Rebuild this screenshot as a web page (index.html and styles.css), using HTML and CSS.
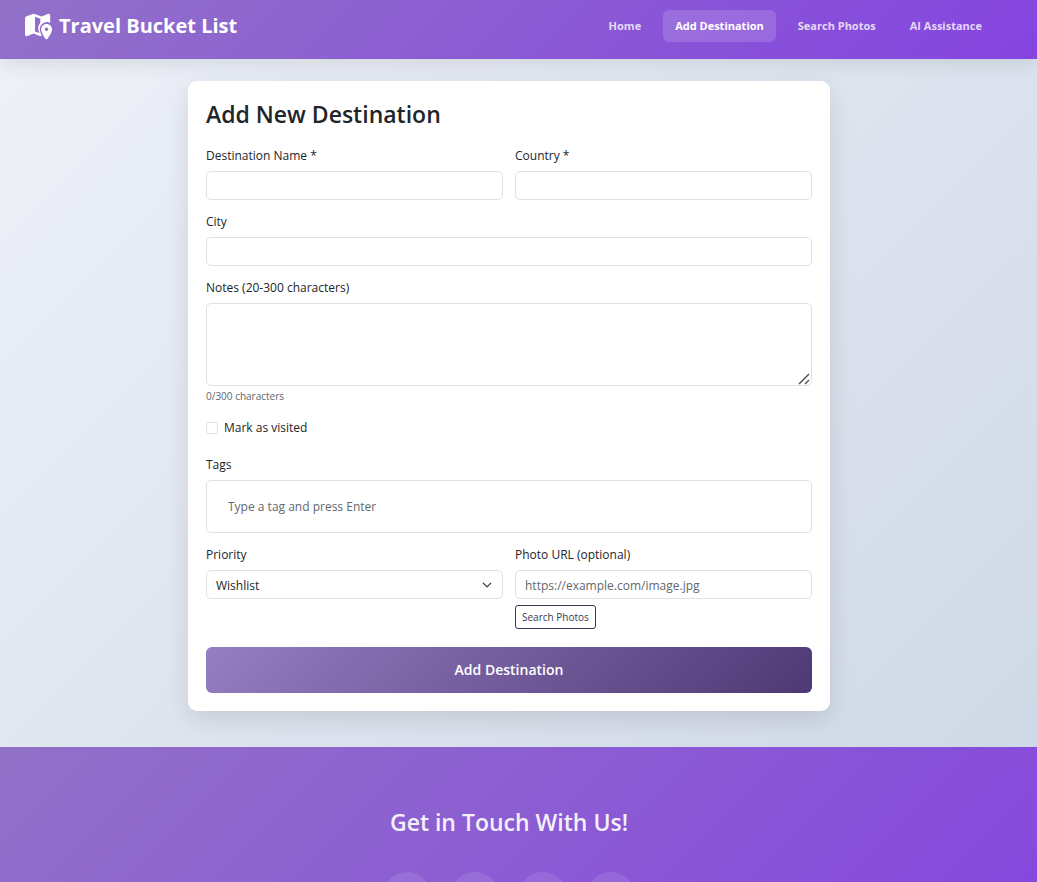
FILE: index.html
```html
<!DOCTYPE html>
<html lang="en">
<head>
<meta charset="utf-8">
<meta name="viewport" content="width=device-width, initial-scale=1">
<title>Travel Bucket List</title>
<link rel="stylesheet" href="styles.css">
</head>
<body>
<header class="navbar">
  <a class="brand" href="#">
    <svg class="brand-icon" viewBox="0 0 29 27" aria-hidden="true">
      <path fill="#fff" fill-rule="evenodd" d="M2.500 3.200 L9 0.900 Q9.800 0.600 10.600 0.900 L17.600 3.600 L23.800 1 Q26.200 0.200 26.200 2.500 V9.600 Q22.500 8.400 19.300 10.100 Q15.800 12.200 15.800 16.300 Q16 19.300 17.700 22.800 Q16.800 23.300 15.800 22.900 L9.600 20.500 L3.400 23.100 Q1 23.900 1 21.500 V5.300 Q1 3.700 2.500 3.200Z M11 3.700 V18.400 L15.400 20 Q13.900 16.500 14.300 14 Q14.700 11.500 16.300 9.800 V5.800Z"/>
      <path fill="#fff" fill-rule="evenodd" d="M22.500 11 C19.400 11 17.200 13.300 17.200 16.200 C17.200 19.100 19.700 23.400 21.700 25.900 Q22.500 26.800 23.300 25.900 C25.300 23.400 28 19.100 28 16.200 C28 13.300 25.700 11 22.500 11Z M22.500 18 A1.800 1.800 0 1 1 22.500 14.400 A1.800 1.800 0 1 1 22.500 18Z"/>
    </svg>
    <span>Travel Bucket List</span>
  </a>
  <nav class="nav">
    <a class="nav-link" href="#">Home</a>
    <a class="nav-link active" href="#" aria-current="page">Add Destination</a>
    <a class="nav-link" href="#">Search Photos</a>
    <a class="nav-link" href="#">AI Assistance</a>
  </nav>
</header>

<main class="page">
  <form class="card">
    <h1 class="card-title">Add New Destination</h1>
    <div class="row">
      <div class="field">
        <label for="name">Destination Name *</label>
        <input class="control" id="name" type="text">
      </div>
      <div class="field">
        <label for="country">Country *</label>
        <input class="control" id="country" type="text">
      </div>
    </div>
    <div class="field">
      <label for="city">City</label>
      <input class="control" id="city" type="text">
    </div>
    <div class="field">
      <label for="notes">Notes (20-300 characters)</label>
      <textarea class="control notes" id="notes"></textarea>
      <small class="hint">0/300 characters</small>
    </div>
    <div class="check">
      <input id="visited" type="checkbox">
      <label for="visited">Mark as visited</label>
    </div>
    <div class="field">
      <label for="tags">Tags</label>
      <input class="control tags" id="tags" type="text" placeholder="Type a tag and press Enter">
    </div>
    <div class="row">
      <div class="field">
        <label for="priority">Priority</label>
        <select class="control select" id="priority"><option>Wishlist</option></select>
      </div>
      <div class="field">
        <label for="photo">Photo URL (optional)</label>
        <input class="control" id="photo" type="url" placeholder="https://example.com/image.jpg">
        <button class="search" type="button">Search Photos</button>
      </div>
    </div>
    <button class="submit" type="submit">Add Destination</button>
  </form>
</main>

<footer class="footer">
  <h2 class="footer-title">Get in Touch With Us!</h2>
  <div class="socials">
    <a class="social" href="#" aria-label="Facebook"></a>
    <a class="social" href="#" aria-label="Instagram"></a>
    <a class="social" href="#" aria-label="LinkedIn"></a>
    <a class="social" href="#" aria-label="GitHub"></a>
  </div>
</footer>
</body>
</html>
```
FILE: styles.css
```css
:root {
  --gutter: 24px;
  --scrollbar: 19px;
  --purple: linear-gradient(135deg, #9171c8 0%, #8544e0 100%);
}

* { box-sizing: border-box; }

body {
  margin: 0;
  font-family: "Segoe UI", "Open Sans", sans-serif;
  font-size: 12px;
  line-height: 18px;
  color: #212529;
  background: linear-gradient(135deg, #eef1f8 0%, #cbd5e4 100%);
}

a { color: inherit; text-decoration: none; }
input, textarea, select, button { font: inherit; color: inherit; }

.navbar {
  display: flex;
  align-items: center;
  justify-content: space-between;
  padding: 10px calc(var(--gutter) + var(--scrollbar)) 17px var(--gutter);
  background: var(--purple);
  color: #fff;
  box-shadow: 0 4px 20px rgba(0, 0, 0, 0.1);
}

.brand {
  display: flex;
  align-items: center;
  gap: 6px;
  font-size: 20px;
  line-height: 32px;
  font-weight: 700;
}

.brand-icon { width: 29px; height: 27px; }

.nav { display: flex; gap: 10px; }

.nav-link {
  padding: 7px 12px;
  border-radius: 6px;
  font-size: 11px;
  font-weight: 700;
  color: rgba(255, 255, 255, 0.8);
}

.nav-link.active {
  color: #fff;
  background: rgba(255, 255, 255, 0.15);
}

.page { padding: 22px calc(var(--gutter) + var(--scrollbar)) 36px var(--gutter); }

.card {
  max-width: 642px;
  margin: 0 auto;
  padding: 18px;
  border-radius: 9px;
  background: #fff;
  box-shadow: 0 8px 24px rgba(0, 0, 0, 0.11);
}

.card-title {
  margin: 0 0 18px;
  font-size: 23px;
  line-height: 30px;
  font-weight: 600;
}

.row { display: grid; grid-template-columns: 1fr 1fr; gap: 12px; }
.field { display: flex; flex-direction: column; align-items: flex-start; margin-bottom: 13px; }
.field label { margin-bottom: 6px; }

.control {
  display: block;
  width: 100%;
  height: 29px;
  padding: 6px 9px 4px;
  border: 1px solid #dee2e6;
  border-radius: 5px;
  background-color: #fff;
}

.control::placeholder { color: #62686e; opacity: 1; }

.notes {
  height: 83px;
  resize: none;
  background-image: url("data:image/svg+xml,%3Csvg xmlns='http://www.w3.org/2000/svg' width='12' height='12' fill='none' stroke='%23555' stroke-width='1.500'%3E%3Cpath d='M1 11L11 1M7 11L11 7'/%3E%3C/svg%3E");
  background-repeat: no-repeat;
  background-position: right 1px bottom 0;
}

.hint { font-size: 10px; line-height: 16px; margin-top: 2px; color: #60666c; }

.check { display: flex; align-items: center; gap: 6px; margin: 15px 0 19px; }

.check input {
  appearance: none;
  width: 12px;
  height: 12px;
  margin: 0;
  border: 1px solid #dee2e6;
  border-radius: 3px;
  background: #fff;
}

.tags { height: 53px; padding: 4px 21px; }

.select {
  appearance: none;
  background-image: url("data:image/svg+xml,%3Csvg xmlns='http://www.w3.org/2000/svg' viewBox='0 0 16 16'%3E%3Cpath fill='none' stroke='%23343a40' stroke-linecap='round' stroke-linejoin='round' stroke-width='2' d='m2 5 6 6 6-6'/%3E%3C/svg%3E");
  background-repeat: no-repeat;
  background-position: right 10px center;
  background-size: 10px 10px;
}

.search {
  margin-top: 6px;
  padding: 2px 6px;
  border: 1px solid #343a4f;
  border-radius: 3px;
  background: transparent;
  color: #343a4f;
  font-size: 10px;
}

.submit {
  display: block;
  width: 100%;
  margin-top: 5px;
  padding: 12px;
  border: 0;
  border-radius: 6px;
  background: linear-gradient(135deg, #967fc2 0%, #4e3874 100%);
  color: #fff;
  font-size: 14px;
  line-height: 22px;
  font-weight: 600;
}

.footer {
  padding: 60px calc(var(--gutter) + var(--scrollbar)) 100px var(--gutter);
  background: var(--purple);
  color: #f3f0f9;
  text-align: center;
}

.footer-title { margin: 0 0 35px; font-size: 23px; line-height: 30px; font-weight: 600; }
.socials { display: flex; justify-content: center; gap: 20px; }

.social {
  width: 48px;
  height: 48px;
  border-radius: 50%;
  background: rgba(255, 255, 255, 0.1);
}
```
